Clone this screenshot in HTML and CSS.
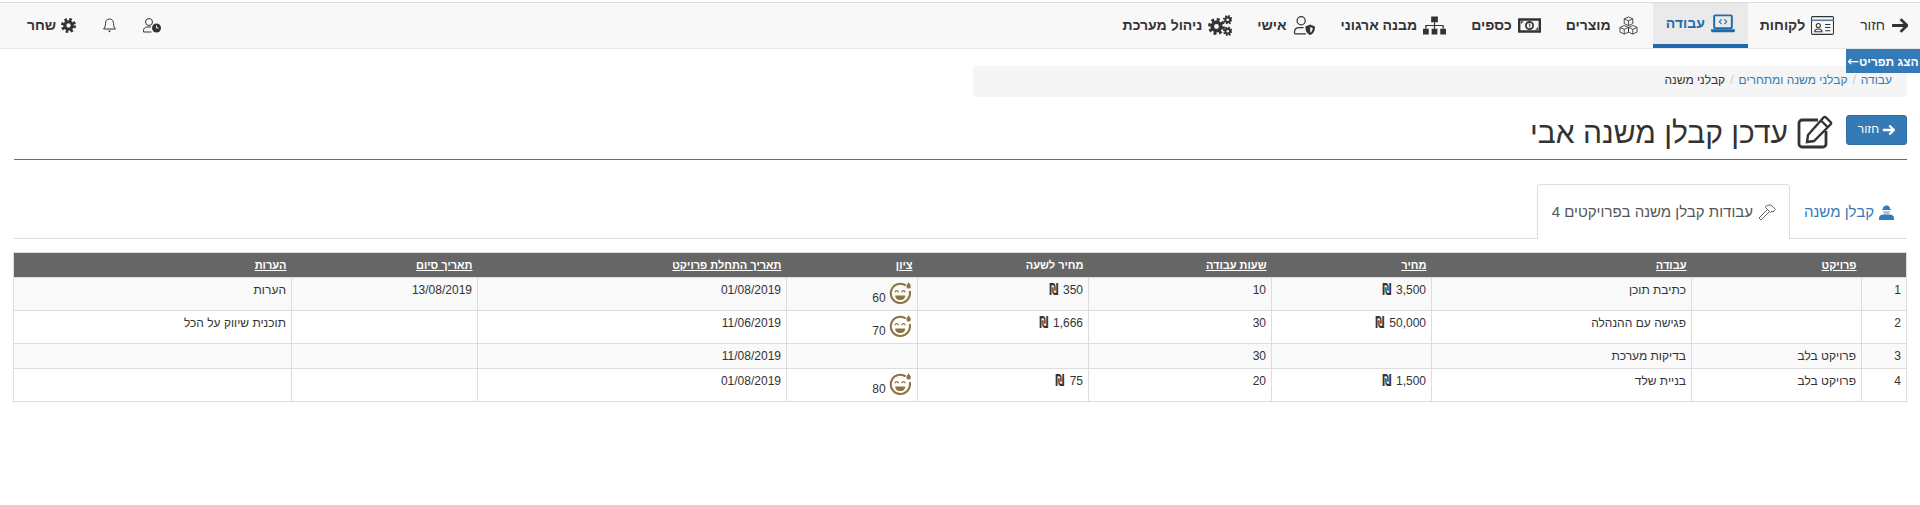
FILE: index.html
```html
<!DOCTYPE html>
<html lang="he" dir="rtl">
<head>
<meta charset="utf-8">
<title>עדכן קבלן משנה אבי</title>
<link rel="stylesheet" href="styles.css">
</head>
<body>
<svg class="defs" aria-hidden="true">
  <defs>
    <symbol id="gear" viewBox="0 0 16 16">
      <circle cx="8" cy="8" r="6.200" fill="none" stroke="currentColor" stroke-width="3.600" stroke-dasharray="2.600 2.270"/>
      <circle cx="8" cy="8" r="4" fill="none" stroke="currentColor" stroke-width="3.400"/>
    </symbol>
    <symbol id="smile" viewBox="0 0 24 24">
      <path d="M17.500 3.600A10 10 0 1 0 21.600 9.500" fill="none" stroke="#8f7340" stroke-width="2.200"/>
      <path d="M20.500 0.300c1.300 1.800 2.300 3 2.300 4.300a2.300 2.300 0 0 1-4.600 0c0-1.300 1-2.500 2.300-4.300z" fill="#8f7340"/>
      <path d="M6.200 10.600c.8-2 3-2 3.800 0M13.200 10.600c.8-2 3-2 3.800 0" fill="none" stroke="#8f7340" stroke-width="1.300"/>
      <path d="M6.500 14h10.400c0 3-2.300 4.800-5.200 4.800S6.500 17 6.500 14z" fill="#8f7340"/>
    </symbol>
  </defs>
</svg>

<nav class="navbar">
  <a class="nav-item plain" href="#">
    <svg class="ico ico-arrow" viewBox="0 0 16 14"><path d="M9 1l6 6-6 6M14 7H1" fill="none" stroke="currentColor" stroke-width="2.600"/></svg>
    <span>חזור</span>
  </a>
  <a class="nav-item" href="#">
    <svg class="ico ico-wide" viewBox="0 0 22 18"><rect x=".5" y=".5" width="21" height="17" rx="1" fill="none" stroke="currentColor"/><path d="M.5 4h21" stroke="#5b7f9e" stroke-width="1.500"/><circle cx="7" cy="9" r="2" fill="none" stroke="currentColor"/><path d="M3.500 15c.3-3.600 6.700-3.600 7 0zM13.500 8h5M13.500 11h5M13.500 14h5" fill="none" stroke="currentColor"/></svg>
    <span>לקוחות</span>
  </a>
  <a class="nav-item active" href="#">
    <svg class="ico ico-laptop" viewBox="0 0 25 19"><rect x="3.300" y="1" width="18.400" height="13.500" rx="1" fill="none" stroke="currentColor" stroke-width="2"/><path d="M11 5.200L8.700 7.700 11 10.200M14 5.200l2.300 2.500L14 10.200" fill="none" stroke="currentColor" stroke-width="1.200"/><path d="M0 15.500h25V17a1.500 1.500 0 0 1-1.500 1.500h-22A1.500 1.500 0 0 1 0 17z" fill="currentColor"/></svg>
    <span>עבודה</span>
  </a>
  <a class="nav-item" href="#">
    <svg class="ico ico-wide" viewBox="0 0 22 20"><path d="M11 1l4.500 2v5L11 10 6.500 8V3zM6.500 10l4.500 2v5l-4.500 2L2 17v-5zM15.500 10l4.500 2v5l-4.500 2L11 17v-5zM6.500 3L11 5l4.500-2M11 5v5M2 12l4.500 2 4.500-2M6.500 14v5M11 12l4.500 2 4.500-2M15.500 14v5" fill="none" stroke="currentColor" stroke-width=".9"/></svg>
    <span>מוצרים</span>
  </a>
  <a class="nav-item" href="#">
    <svg class="ico ico-wide" viewBox="0 0 24 15"><path fill-rule="evenodd" d="M0 0h24v15H0zM2.500 2.500v10h19v-10z" fill="currentColor"/><circle cx="12" cy="7.500" r="3.800" fill="none" stroke="currentColor" stroke-width="1.800"/><path d="M11 5.800h1.300v3.600" fill="none" stroke="currentColor"/><path d="M3 3h3L3 6zM21 12h-3l3-3z" fill="currentColor"/></svg>
    <span>כספים</span>
  </a>
  <a class="nav-item" href="#">
    <svg class="ico ico-wide" viewBox="0 0 24 19"><path d="M8.500 0h7v6h-7zM0 13h6v6H0zM9 13h6v6H9zM18 13h6v6h-6z" fill="currentColor"/><path d="M12 6v7M3 13V9.500h18V13" fill="none" stroke="currentColor" stroke-width="1.300"/></svg>
    <span>מבנה ארגוני</span>
  </a>
  <a class="nav-item" href="#">
    <svg class="ico ico-wide" viewBox="0 0 23 20"><circle cx="8" cy="5" r="4.300" fill="none" stroke="currentColor" stroke-width="1.300"/><path d="M1 18.800v-2c0-3 2-4.500 5-4.500h4.500M1 18.800h12" fill="none" stroke="currentColor" stroke-width="1.300"/><path fill-rule="evenodd" d="M17.500 9l5 2c0 5-1.500 7.500-5 9-3.500-1.500-5-4-5-9zM17.500 11.500v6c1.700-1 2.600-2.800 2.700-5z" fill="currentColor"/></svg>
    <span>אישי</span>
  </a>
  <a class="nav-item" href="#">
    <svg class="ico ico-gears" viewBox="0 0 24 21"><use href="#gear" x="0" y="3" width="17" height="17"/><use href="#gear" x="15" y="0" width="9.500" height="9.500"/><use href="#gear" x="15" y="11.500" width="9.500" height="9.500"/></svg>
    <span>ניהול מערכת</span>
  </a>

  <div class="nav-left">
    <a class="nav-mini" href="#">
      <svg class="ico ico-user" viewBox="0 0 18 15"><circle cx="6" cy="4" r="3.500" fill="none" stroke="currentColor"/><path d="M.5 14v-1.500c0-2 1.500-3.500 3.500-3.500h4M.5 14h8" fill="none" stroke="currentColor"/><circle cx="13.500" cy="10" r="4.500" fill="currentColor"/><path d="M13.500 7.500V10h2" fill="none" stroke="#f8f8f8"/></svg>
    </a>
    <a class="nav-mini" href="#">
      <svg class="ico ico-bell" viewBox="0 0 13 15"><path d="M6.500 1c-2.800 0-4 2-4 4.500 0 3-1 4.500-2 5.500h12c-1-1-2-2.500-2-5.500C10.500 3 9.300 1 6.500 1z" fill="none" stroke="currentColor"/><path d="M5 12.500h3L6.500 14.500z" fill="currentColor"/></svg>
    </a>
    <a class="nav-user" href="#">
      <svg class="ico ico-gear" viewBox="0 0 16 16"><use href="#gear"/></svg>
      <span>שחר</span>
    </a>
  </div>
</nav>

<a class="show-menu" href="#">הצג תפריט<span class="menu-arrow">←</span></a>

<main class="page">
  <ol class="breadcrumb">
    <li><a href="#">עבודה</a></li>
    <li class="sep">/</li>
    <li><a href="#">קבלני משנה ומתחרים</a></li>
    <li class="sep">/</li>
    <li>קבלני משנה</li>
  </ol>

  <header class="page-header">
    <a class="btn" href="#">
      <svg class="btn-arrow" viewBox="0 0 16 14"><path d="M9 1.500L14.500 7 9 12.500M14 7H1" fill="none" stroke="currentColor" stroke-width="2.800"/></svg>
      <span>חזור</span>
    </a>
    <svg class="edit-ico" viewBox="0 0 36 34"><path d="M21 5H5a3 3 0 0 0-3 3v21a3 3 0 0 0 3 3h21a3 3 0 0 0 3-3V16" fill="none" stroke="currentColor" stroke-width="2.800"/><path d="M29 2.500l4.500 4.500a1.800 1.800 0 0 1 0 2.500L17 26l-7 1 1-7L26.500 2.500a1.800 1.800 0 0 1 2.500 0zM24 5.500l6.500 6.500" fill="none" stroke="currentColor" stroke-width="2.400"/></svg>
    <h1 class="title">עדכן קבלן משנה אבי</h1>
  </header>

  <ul class="tabs">
    <li class="tab"><a href="#">
      <svg class="tab-ico" viewBox="0 0 15 16"><path d="M4 5a3.500 3.500 0 0 1 7 0h1v1H3V5z" fill="#337ab7"/><path d="M4 7h7a3.500 3.500 0 0 1-7 0z" fill="#a9c4dc"/><path d="M0 16v-2c0-2 2-3.500 4.500-3.500h6c2.500 0 4.500 1.500 4.500 3.500v2z" fill="#337ab7"/></svg>
      <span>קבלן משנה</span></a></li>
    <li class="tab tab-active"><a href="#">
      <svg class="tab-ico tab-hammer" viewBox="0 0 18 17"><path d="M9.500 5.500L1 14l2 2 8.500-8.500M7.500 2.500C10 .5 12.500.5 14 2l3.500 3.500L15 8l-1-1-1.500 1.500-5-5z" fill="none" stroke="currentColor" stroke-width=".9"/></svg>
      <span>עבודות קבלן משנה בפרויקטים 4</span></a></li>
  </ul>

  <table class="grid">
    <colgroup>
      <col class="c-num"><col class="c-project"><col class="c-work"><col class="c-price"><col class="c-hours"><col class="c-rate"><col class="c-score"><col class="c-start"><col class="c-end"><col class="c-notes">
    </colgroup>
    <thead>
      <tr>
        <th></th>
        <th><a href="#">פרויקט</a></th>
        <th><a href="#">עבודה</a></th>
        <th><a href="#">מחיר</a></th>
        <th><a href="#">שעות עבודה</a></th>
        <th>מחיר לשעה</th>
        <th><a href="#">ציון</a></th>
        <th><a href="#">תאריך התחלת פרויקט</a></th>
        <th><a href="#">תאריך סיום</a></th>
        <th><a href="#">הערות</a></th>
      </tr>
    </thead>
    <tbody>
      <tr class="tall">
        <td>1</td><td></td><td>כתיבת תוכן</td>
        <td><span>3,500</span> <b class="ils">₪</b></td><td>10</td>
        <td><span>350</span> <b class="ils">₪</b></td>
        <td class="score"><svg class="face"><use href="#smile"/></svg> <span>60</span></td>
        <td>01/08/2019</td><td>13/08/2019</td><td>הערות</td>
      </tr>
      <tr class="tall">
        <td>2</td><td></td><td>פגישה עם ההנהלה</td>
        <td><span>50,000</span> <b class="ils">₪</b></td><td>30</td>
        <td><span>1,666</span> <b class="ils">₪</b></td>
        <td class="score"><svg class="face"><use href="#smile"/></svg> <span>70</span></td>
        <td>11/06/2019</td><td></td><td>תוכנית שיווק על הכל</td>
      </tr>
      <tr class="short">
        <td>3</td><td>פרויקט בלב</td><td>בדיקות מערכת</td>
        <td></td><td>30</td><td></td><td></td>
        <td>11/08/2019</td><td></td><td></td>
      </tr>
      <tr class="tall">
        <td>4</td><td>פרויקט בלב</td><td>בניית שלד</td>
        <td><span>1,500</span> <b class="ils">₪</b></td><td>20</td>
        <td><span>75</span> <b class="ils">₪</b></td>
        <td class="score"><svg class="face"><use href="#smile"/></svg> <span>80</span></td>
        <td>01/08/2019</td><td></td><td></td>
      </tr>
    </tbody>
  </table>
</main>
</body>
</html>
```

FILE: styles.css
```css
* { box-sizing: border-box; }
html, body { margin: 0; padding: 0; }
body {
  font-family: "Liberation Sans", Arial, sans-serif;
  font-size: 14px;
  line-height: 1.42857;
  color: #333;
  background: #fff;
  overflow: hidden;
}
a { color: inherit; text-decoration: none; }
.defs { position: absolute; width: 0; height: 0; }

.navbar {
  display: flex;
  align-items: stretch;
  height: 47px;
  margin-top: 2px;
  background: #f8f8f8;
  border-top: 1px solid #ddd;
  border-bottom: 1px solid #e7e7e7;
}
.nav-item {
  display: flex;
  align-items: center;
  gap: 6px;
  padding: 0 13px 0 12px;
  font-weight: 700;
  font-size: 14px;
  color: #333;
}
.nav-item.plain { padding-right: 12px; padding-left: 13px; font-weight: 400; }
.nav-item.active {
  padding: 0 13px 0 13px;
  background: #eaeaea;
  color: #1f6aad;
  border-bottom: 4px solid #1f6aad;
}
.ico { display: block; flex: none; }
.ico-arrow { width: 17px; height: 15px; }
.ico-wide { width: 23px; height: 19px; }
.ico-laptop { width: 24px; height: 19px; }
.ico-gears { width: 24px; height: 21px; }
.ico-user { width: 18px; height: 15px; }
.ico-bell { width: 13px; height: 15px; }
.ico-gear { width: 15px; height: 15px; }
.nav-left {
  display: flex;
  align-items: center;
  gap: 27px;
  margin-right: auto;
  padding-left: 27px;
}
.nav-mini { display: block; }
.nav-user {
  display: flex;
  align-items: center;
  gap: 5px;
  font-weight: 700;
}

.show-menu {
  position: absolute;
  top: 49px;
  right: 0;
  width: 74px;
  height: 24px;
  background: #337ab7;
  color: #fff;
  font-size: 12px;
  font-weight: 700;
  line-height: 24px;
  text-align: center;
  white-space: nowrap;
}
.menu-arrow {
  font-family: "DejaVu Sans", sans-serif;
  font-size: 14px;
  font-weight: 400;
}

.page { padding: 0 13px 0 14px; }

.breadcrumb {
  display: flex;
  gap: 5px;
  width: 934px;
  height: 31px;
  margin: 17px 0 0;
  padding: 6px 15px;
  list-style: none;
  background: #f5f5f5;
  border-radius: 4px;
  font-size: 12px;
  line-height: 17px;
}
.breadcrumb a { color: #337ab7; }
.breadcrumb .sep { color: #ccc; }

.page-header {
  display: flex;
  align-items: flex-start;
  height: 44px;
  margin-top: 18px;
  box-sizing: content-box;
  border-bottom: 1px solid #337ab7;
}
.btn {
  display: flex;
  align-items: center;
  justify-content: center;
  gap: 3px;
  width: 61px;
  height: 30px;
  background: #337ab7;
  border: 1px solid #2e6da4;
  border-radius: 3px;
  color: #fff;
  font-size: 12px;
}
.btn-arrow { width: 13px; height: 12px; }
.edit-ico { width: 36px; height: 34px; margin-right: 13px; color: #333; }
.title {
  margin: 0 9px 0 0;
  font-size: 30px;
  font-weight: 400;
  line-height: 36px;
  color: #333;
}

.tabs {
  display: flex;
  height: 55px;
  margin: 24px 0 0;
  padding: 0;
  list-style: none;
  border-bottom: 1px solid #ddd;
}
.tab a {
  display: flex;
  align-items: center;
  gap: 5px;
  height: 54px;
  padding: 0 12px 0 13px;
  font-size: 15px;
  color: #337ab7;
  border: 1px solid transparent;
  border-bottom: 0;
  border-radius: 4px 4px 0 0;
}
.tab-active a {
  height: 55px;
  padding: 0 13px 0 14px;
  color: #555;
  background: #fff;
  border-color: #ddd;
}
.tab-ico { width: 15px; height: 16px; flex: none; }
.tab-hammer { width: 18px; height: 17px; }

.grid {
  width: 1893px;
  margin-top: 13px;
  table-layout: fixed;
  border-collapse: collapse;
  font-size: 12px;
  line-height: 16px;
  border: 1px solid #ddd;
}
.c-num { width: 45px; }
.c-project { width: 170px; }
.c-work { width: 260px; }
.c-price { width: 160px; }
.c-hours { width: 183px; }
.c-rate { width: 171px; }
.c-score { width: 131px; }
.c-start { width: 309px; }
.c-end { width: 186px; }
.c-notes { width: 278px; }
.grid th {
  height: 24px;
  padding: 4px 5px;
  background: #666;
  color: #fff;
  font-size: 11px;
  font-weight: 700;
  text-align: right;
}
.grid th a { color: #fff; text-decoration: underline; }
.grid td {
  padding: 4px 5px;
  vertical-align: top;
  text-align: right;
  border: 1px solid #ddd;
}
.grid tbody tr:nth-child(odd) { background: #f9f9f9; }
.tall { height: 33px; }
.short { height: 25px; }
.ils {
  display: inline-block;
  width: 9px;
  font-family: "DejaVu Sans", sans-serif;
  font-size: 15px;
  line-height: 12px;
  text-align: center;
  vertical-align: -1px;
  transform: scaleX(.68);
}
.score { line-height: 12px; }
.face {
  width: 23px;
  height: 23px;
  vertical-align: -3px;
}
```
